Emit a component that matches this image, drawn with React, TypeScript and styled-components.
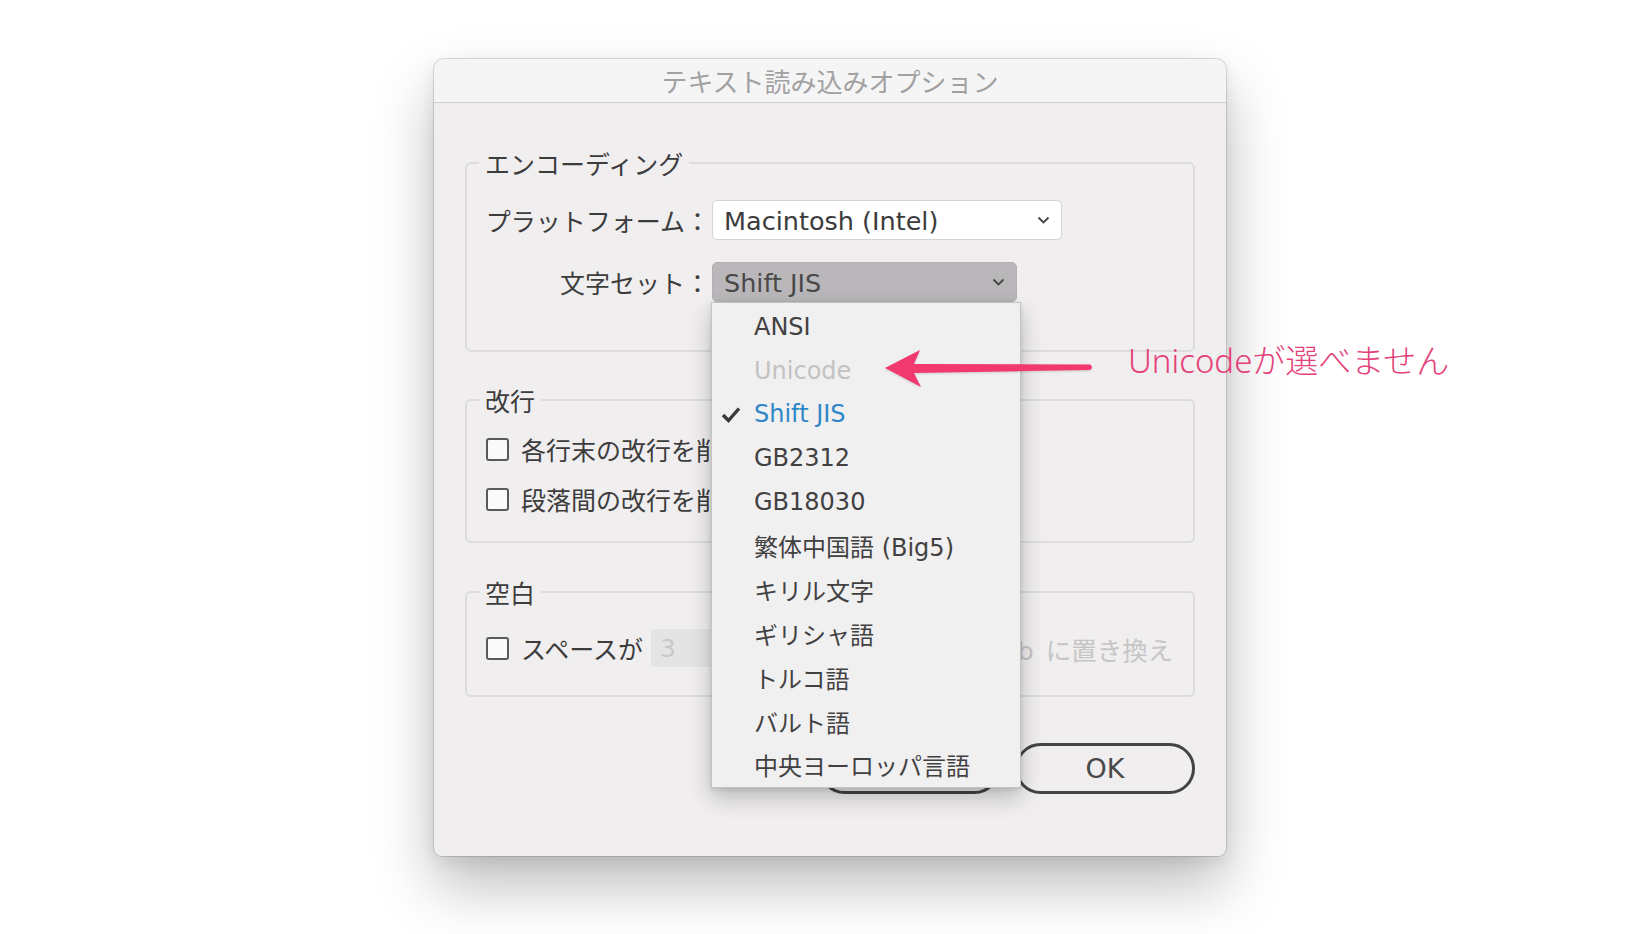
import styled, { createGlobalStyle } from 'styled-components';

const GlobalStyle = createGlobalStyle`
  html, body {
    margin: 0;
    padding: 0;
    background: #ffffff;
  }
  body {
    font-family: "DejaVu Sans", "Noto Sans CJK JP", sans-serif;
    color: #3d3c3d;
  }
`;

const Page = styled.div`
  position: relative;
  width: 1636px;
  height: 934px;
  padding: 59px 0 0 434px;
  box-sizing: border-box;
  overflow: hidden;
`;

const Dialog = styled.div`
  width: 792px;
  height: 797px;
  background: #f0eeef;
  border-radius: 10px 10px 8px 8px;
  box-shadow: 0 0 0 1px rgba(0, 0, 0, 0.13), 0 30px 60px rgba(0, 0, 0, 0.26),
    0 6px 16px rgba(0, 0, 0, 0.08);
  display: flex;
  flex-direction: column;
`;

const TitleBar = styled.div`
  height: 43px;
  background: #f6f5f6;
  border-bottom: 1px solid #d0cfd0;
  border-radius: 10px 10px 0 0;
  display: flex;
  align-items: center;
  justify-content: center;
  font-family: "Noto Sans CJK JP", sans-serif;
  font-size: 26px;
  color: #a2a1a2;
`;

const Body = styled.div`
  padding: 45px 31px 0;
  display: flex;
  flex-direction: column;
`;

const Group = styled.fieldset<{ $top: number; $pt: number; $pb: number }>`
  margin: ${(p) => p.$top}px 0 0;
  padding: ${(p) => p.$pt}px 18px ${(p) => p.$pb}px;
  border: 2px solid #dddbdd;
  border-radius: 6px;
  min-width: 0;
`;

const Legend = styled.legend`
  font-family: "Noto Sans CJK JP", sans-serif;
  font-size: 25px;
  line-height: 30px;
  padding: 0 6px;
  margin-left: -6px;
  color: #3d3c3d;
`;

const FormGrid = styled.div`
  display: grid;
  grid-template-columns: 225px auto;
  column-gap: 2px;
  row-gap: 22px;
  align-items: center;
`;

const Label = styled.div`
  font-family: "Noto Sans CJK JP", sans-serif;
  font-size: 25px;
  line-height: 30px;
  text-align: right;
  white-space: nowrap;
`;

const Select = styled.div<{ $w: number; $active?: boolean }>`
  position: relative;
  width: ${(p) => p.$w}px;
  height: 40px;
  box-sizing: border-box;
  border-radius: 5px;
  border: 1px solid ${(p) => (p.$active ? '#b3b1b3' : '#d5d4d5')};
  background: ${(p) => (p.$active ? '#b9b7b9' : '#ffffff')};
  color: ${(p) => (p.$active ? '#4a494a' : '#3d3c3d')};
  display: flex;
  align-items: center;
  justify-content: space-between;
  padding: 2px 11px 0 11px;
  font-size: 25.5px;
`;

const Chevron = styled.svg`
  width: 13px;
  height: 8px;
  flex: none;
  margin-top: -2px;
`;

const Menu = styled.div`
  position: absolute;
  z-index: 10;
  top: calc(100% + 1px);
  left: -2px;
  width: 308px;
  padding-top: 2px;
  background: #f1f0f1;
  border: 1px solid #c4c3c4;
  box-shadow: 0 10px 22px rgba(0, 0, 0, 0.22), 0 2px 5px rgba(0, 0, 0, 0.1);
  display: flex;
  flex-direction: column;
`;

const MenuItem = styled.div<{ $state?: 'disabled' | 'selected' }>`
  height: 43.8px;
  display: flex;
  align-items: center;
  padding-left: 9px;
  font-size: 24px;
  white-space: nowrap;
  color: ${(p) =>
    p.$state === 'disabled' ? '#c3c2c3' : p.$state === 'selected' ? '#2f87c8' : '#424142'};
`;

const CheckSlot = styled.span`
  width: 33px;
  flex: none;
  display: flex;
  align-items: center;
`;

const CheckRows = styled.div`
  display: flex;
  flex-direction: column;
  gap: 20px;
`;

const CheckRow = styled.div`
  display: flex;
  align-items: center;
  height: 30px;
  gap: 12px;
  font-family: "Noto Sans CJK JP", sans-serif;
  font-size: 25px;
  white-space: nowrap;
`;

const Box = styled.span`
  width: 23px;
  height: 23px;
  box-sizing: border-box;
  margin-left: 1px;
  border: 2px solid #5b5a5b;
  border-radius: 3px;
  background: #fafafa;
  flex: none;
`;

const SpaceRow = styled(CheckRow)`
  height: 38px;
`;

const NumInput = styled.span`
  width: 91px;
  height: 38px;
  margin-left: -4px;
  box-sizing: border-box;
  border-radius: 3px;
  background: #e5e4e5;
  color: #c9c8c9;
  font-family: "DejaVu Sans", sans-serif;
  font-size: 25px;
  display: flex;
  align-items: center;
  padding-left: 9px;
  flex: none;
`;

const Muted = styled.span`
  color: #c6c5c6;
  margin-left: -2px;
  word-spacing: 4px;
  font-family: "DejaVu Sans", "Noto Sans CJK JP", sans-serif;
  font-size: 25.5px;
`;

const Buttons = styled.div`
  margin-top: 46px;
  display: flex;
  justify-content: flex-end;
  gap: 15px;
`;

const Button = styled.button<{ $w: number }>`
  width: ${(p) => p.$w}px;
  height: 51px;
  border: 3.5px solid #454445;
  border-radius: 26px;
  background: transparent;
  color: #4a494a;
  font-family: "DejaVu Sans", "Noto Sans CJK JP", sans-serif;
  font-size: 27px;
  padding: 0;
`;

const Arrow = styled.svg`
  position: absolute;
  z-index: 20;
  left: 881px;
  top: 345px;
  width: 216px;
  height: 48px;
  filter: drop-shadow(0 1px 1px rgba(0, 0, 0, 0.15));
`;

const Note = styled.div`
  position: absolute;
  z-index: 20;
  left: 1128px;
  top: 340px;
  font-family: "Noto Sans", "Noto Sans CJK JP", sans-serif;
  font-weight: 300;
  font-size: 33px;
  line-height: 42px;
  color: #e4417a;
  white-space: nowrap;
`;

const charsets = [
  'ANSI',
  'Unicode',
  'Shift JIS',
  'GB2312',
  'GB18030',
  '繁体中国語 (Big5)',
  'キリル文字',
  'ギリシャ語',
  'トルコ語',
  'バルト語',
  '中央ヨーロッパ言語',
];

function ChevronIcon() {
  return (
    <Chevron viewBox="0 0 13 8">
      <polyline points="1.5,1.5 6.5,6.5 11.5,1.5" fill="none" stroke="#454445" strokeWidth="1.8" />
    </Chevron>
  );
}

export default function App() {
  return (
    <Page>
      <GlobalStyle />
      <Dialog>
        <TitleBar>テキスト読み込みオプション</TitleBar>
        <Body>
          <Group $top={0} $pt={22} $pb={48}>
            <Legend>エンコーディング</Legend>
            <FormGrid>
              <Label>プラットフォーム：</Label>
              <Select $w={350}>
                <span>Macintosh (Intel)</span>
                <ChevronIcon />
              </Select>
              <Label>文字セット：</Label>
              <Select $w={305} $active>
                <span>Shift JIS</span>
                <ChevronIcon />
                <Menu>
                  {charsets.map((name) => {
                    const state =
                      name === 'Unicode' ? 'disabled' : name === 'Shift JIS' ? 'selected' : undefined;
                    return (
                      <MenuItem key={name} $state={state}>
                        <CheckSlot>
                          {state === 'selected' && (
                            <svg width="20" height="17" viewBox="0 0 20 17">
                              <path d="M2 9 L7.5 14.5 L18 2.5" fill="none" stroke="#3a393a" strokeWidth="3.4" />
                            </svg>
                          )}
                        </CheckSlot>
                        {name}
                      </MenuItem>
                    );
                  })}
                </Menu>
              </Select>
            </FormGrid>
          </Group>

          <Group $top={33} $pt={19} $pb={27}>
            <Legend>改行</Legend>
            <CheckRows>
              <CheckRow>
                <Box />
                各行末の改行を削除
              </CheckRow>
              <CheckRow>
                <Box />
                段落間の改行を削除
              </CheckRow>
            </CheckRows>
          </Group>

          <Group $top={34} $pt={22} $pb={28}>
            <Legend>空白</Legend>
            <SpaceRow>
              <Box />
              スペースが
              <NumInput>3</NumInput>
              <Muted>個以上のスペースを Tab に置き換え</Muted>
            </SpaceRow>
          </Group>

          <Buttons>
            <Button $w={181}>キャンセル</Button>
            <Button $w={180}>OK</Button>
          </Buttons>
        </Body>
      </Dialog>

      <Arrow viewBox="0 0 216 48">
        <path
          d="M4 23 L39 5 L33 19 L209 19.5 Q213 22 209 25 L33 28 L40 42 Z"
          fill="#f2396f"
        />
      </Arrow>
      <Note>Unicodeが選べません</Note>
    </Page>
  );
}
